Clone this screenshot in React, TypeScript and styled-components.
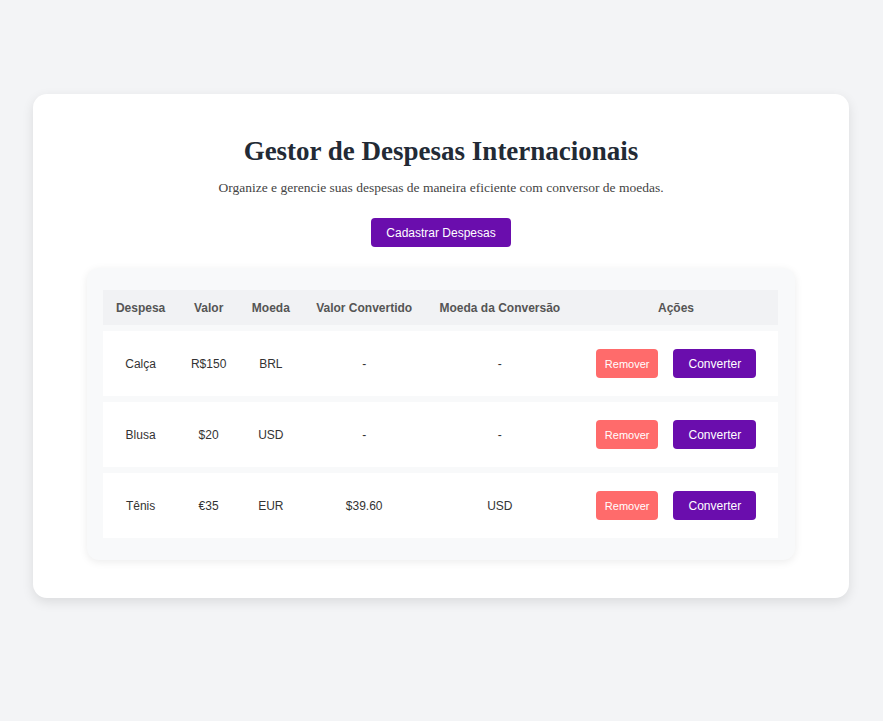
import React from "react";
import styled, { createGlobalStyle } from "styled-components";

const Global = createGlobalStyle`
  html, body { margin: 0; padding: 0; background: #f3f4f6; }
  body { font-family: "Liberation Serif", "Times New Roman", serif; }
`;

const Page = styled.div`
  padding: 94px 0 123px 33px;
  display: flex;
`;

const Card = styled.div`
  width: 816px;
  box-sizing: border-box;
  background: #ffffff;
  border-radius: 14px;
  box-shadow: 0 4px 12px rgba(0, 0, 0, 0.1);
  padding: 40px 54px 38px;
  display: flex;
  flex-direction: column;
  align-items: center;
`;

const Title = styled.h1`
  margin: 0;
  font-family: "Liberation Serif", "Times New Roman", serif;
  font-size: 27px;
  line-height: 34px;
  font-weight: bold;
  color: #222a35;
`;

const Subtitle = styled.p`
  margin: 11px 0 0;
  font-size: 13.5px;
  line-height: 18px;
  color: #444;
`;

const Button = styled.button<{ $variant?: "primary" | "danger"; $small?: boolean }>`
  border: none;
  border-radius: 4px;
  cursor: pointer;
  height: 29px;
  white-space: nowrap;
  padding: 0 ${(p) => (p.$small ? "9px" : "15px")};
  font-family: "Liberation Sans", Arial, sans-serif;
  font-size: ${(p) => (p.$small ? "11px" : "12px")};
  font-weight: 400;
  color: #fff;
  background: ${(p) => (p.$variant === "danger" ? "#ff6b6b" : "#6a0dad")};
`;

const CreateButton = styled(Button)`
  margin-top: 21px;
  padding: 0 15px;
`;

const TableBox = styled.div`
  margin-top: 21px;
  align-self: stretch;
  background: #f8f9fa;
  border-radius: 12px;
  box-shadow: 0 2px 8px rgba(0, 0, 0, 0.08);
  padding: 16px 17px 16px 16px;
`;

const Table = styled.table`
  width: 100%;
  border-collapse: separate;
  border-spacing: 0 6px;
  font-family: "Liberation Sans", Arial, sans-serif;
  font-size: 12px;
`;

const Th = styled.th`
  background: #f1f2f4;
  color: #555;
  font-weight: bold;
  height: 35px;
  padding: 0 12px;
  text-align: center;
  white-space: nowrap;
`;

const Tr = styled.tr`
  background: #ffffff;
`;

const Td = styled.td`
  height: 65px;
  padding: 0 12px;
  text-align: center;
  color: #333;
  white-space: nowrap;
`;

const Actions = styled.div`
  display: flex;
  justify-content: center;
  gap: 15px;
`;

type Row = { name: string; value: string; cur: string; conv: string; convCur: string };

const rows: Row[] = [
  { name: "Calça", value: "R$150", cur: "BRL", conv: "-", convCur: "-" },
  { name: "Blusa", value: "$20", cur: "USD", conv: "-", convCur: "-" },
  { name: "Tênis", value: "€35", cur: "EUR", conv: "$39.60", convCur: "USD" },
];

export default function App() {
  return (
    <>
      <Global />
      <Page>
        <Card>
          <Title>Gestor de Despesas Internacionais</Title>
          <Subtitle>Organize e gerencie suas despesas de maneira eficiente com conversor de moedas.</Subtitle>
          <CreateButton>Cadastrar Despesas</CreateButton>
          <TableBox>
            <Table>
              <thead>
                <tr>
                  <Th>Despesa</Th>
                  <Th>Valor</Th>
                  <Th>Moeda</Th>
                  <Th>Valor Convertido</Th>
                  <Th>Moeda da Conversão</Th>
                  <Th style={{ width: 180 }}>Ações</Th>
                </tr>
              </thead>
              <tbody>
                {rows.map((r) => (
                  <Tr key={r.name}>
                    <Td>{r.name}</Td>
                    <Td>{r.value}</Td>
                    <Td>{r.cur}</Td>
                    <Td>{r.conv}</Td>
                    <Td>{r.convCur}</Td>
                    <Td>
                      <Actions>
                        <Button $variant="danger" $small>Remover</Button>
                        <Button>Converter</Button>
                      </Actions>
                    </Td>
                  </Tr>
                ))}
              </tbody>
            </Table>
          </TableBox>
        </Card>
      </Page>
    </>
  );
}
